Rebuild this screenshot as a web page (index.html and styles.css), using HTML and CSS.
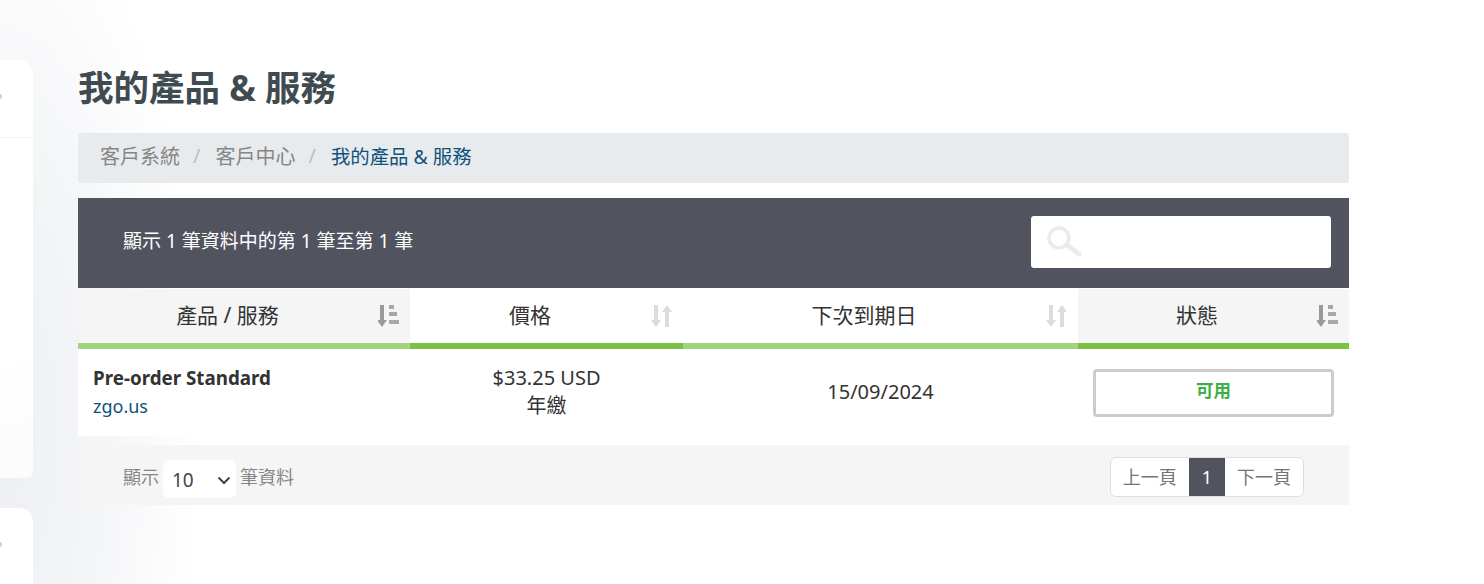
FILE: index.html
```html
<!DOCTYPE html>
<html lang="zh-Hant">
<head>
  <meta charset="UTF-8" />
  <meta name="viewport" content="width=device-width, initial-scale=1.0"/>
  <title>我的產品 &amp; 服務</title>
  <link rel="stylesheet" href="styles.css">
</head>
<body>
  <div class="page">
    <!-- Sidebar cards, mostly off screen -->
    <aside class="sidebar">
      <div class="side-card side-card-first">
        <div class="side-head"><span class="side-dot"></span></div>
      </div>
      <div class="side-card side-card-second">
        <div class="side-head"><span class="side-dot"></span></div>
      </div>
    </aside>

    <main class="content">
      <h1 class="page-title">我的產品 &amp; 服務</h1>

      <nav class="breadcrumb">
        <a href="#">客戶系統</a>
        <span class="crumb-sep">/</span>
        <a href="#">客戶中心</a>
        <span class="crumb-sep">/</span>
        <span class="crumb-active">我的產品 &amp; 服務</span>
      </nav>

      <div class="table-top">
        <div class="table-info">顯示 1 筆資料中的第 1 筆至第 1 筆</div>
        <div class="search-box">
          <svg class="search-icon" viewBox="0 0 38 32" width="38" height="32">
            <circle cx="14" cy="13" r="10" fill="none" stroke="#e9ebee" stroke-width="3.5"/>
            <path d="M22 20 L34 29" stroke="#e9ebee" stroke-width="5" stroke-linecap="round"/>
          </svg>
        </div>
      </div>

      <table class="products">
        <colgroup>
          <col class="col-product"><col class="col-price"><col class="col-date"><col class="col-status">
        </colgroup>
        <thead>
          <tr>
            <th class="sorted">
              產品 / 服務
              <svg class="sort-icon" viewBox="0 0 22 22" width="22" height="22">
                <path d="M2 0h4v15h3l-5 7-5-7h3z" fill="#9a9a9a"/>
                <path d="M11 0h5v4h-5zM11 7h8v4h-8zM11 15h10v4H11z" fill="#a8a8a8"/>
              </svg>
            </th>
            <th class="plain">
              價格
              <svg class="sort-icon" viewBox="0 0 22 22" width="22" height="22">
                <path d="M3 0h4v15h3l-5 7-5-7h3zM14 22h4V7h3l-5-7-5 7h3z" fill="#dcdcdc"/>
              </svg>
            </th>
            <th class="plain">
              下次到期日
              <svg class="sort-icon" viewBox="0 0 22 22" width="22" height="22">
                <path d="M3 0h4v15h3l-5 7-5-7h3zM14 22h4V7h3l-5-7-5 7h3z" fill="#dcdcdc"/>
              </svg>
            </th>
            <th class="sorted">
              狀態
              <svg class="sort-icon" viewBox="0 0 22 22" width="22" height="22">
                <path d="M2 0h4v15h3l-5 7-5-7h3z" fill="#9a9a9a"/>
                <path d="M11 0h5v4h-5zM11 7h8v4h-8zM11 15h10v4H11z" fill="#a8a8a8"/>
              </svg>
            </th>
          </tr>
        </thead>
        <tbody>
          <tr>
            <td class="cell-product"><strong>Pre-order Standard</strong><a href="#">zgo.us</a></td>
            <td class="cell-center">$33.25 USD<br>年繳</td>
            <td class="cell-center">15/09/2024</td>
            <td class="cell-status"><span class="status-badge">可用</span></td>
          </tr>
        </tbody>
      </table>

      <div class="table-foot">
        <div class="page-length">
          顯示
          <div class="length-select">10
            <svg viewBox="0 0 14 9" width="14" height="9"><path d="M1.5 1.5 7 7l5.5-5.5" fill="none" stroke="#444" stroke-width="2"/></svg>
          </div>
          筆資料
        </div>
        <div class="pager">
          <a href="#">上一頁</a>
          <a href="#" class="current">1</a>
          <a href="#">下一頁</a>
        </div>
      </div>
    </main>
  </div>
</body>
</html>
```

FILE: styles.css
```css
* { margin:0; padding:0; box-sizing:border-box; }
html, body { height:100%; overflow:hidden; }
body {
  font-family:"Noto Sans", "Noto Sans CJK TC", sans-serif;
  color:#333;
  background:
    radial-gradient(ellipse 200px 560px at 0 430px, #eeeff3 0%, #f4f5f7 50%, #fff 100%);
}
a { text-decoration:none; }

.page { display:flex; height:584px; overflow:hidden; }

.sidebar { width:33px; flex:none; padding-top:60px; }
.side-card { background:#fff; }
.side-card-first { height:418px; margin-bottom:30px; border-radius:0 14px 6px 0; background:linear-gradient(160deg, #fff 70%, #fbfbfc); }
.side-card-second { height:76px; border-radius:0 14px 0 0; }
.side-head { height:78px; border-bottom:1px solid #f1f2f4; position:relative; }
.side-card-second .side-head { height:76px; border-bottom:none; }
.side-dot { position:absolute; left:-3px; top:34px; width:5px; height:5px; background:#c9ccd2; border-radius:50%; }

.content { width:1271px; margin-left:45px; }

.page-title { font-size:35.5px; line-height:44px; margin-top:65px; font-weight:700; color:#3f4b50; }

.breadcrumb {
  display:flex; align-items:center;
  height:50px; margin-top:24px; padding:0 22px 5px;
  background:#e8ebee; border-radius:3px;
  font-size:20px;
}
.breadcrumb a { color:#868686; }
.crumb-sep { color:#bdbdbd; margin:0 15px 0 13px; }
.crumb-active { color:#0f5279; font-size:19.4px; }

.table-top {
  display:flex; align-items:center; justify-content:space-between;
  height:90px; margin-top:15px; padding:0 18px 0 45px;
  background:#51545f;
}
.table-info { color:#fff; font-size:19px; margin-top:-6px; }
.search-box { width:300px; height:52px; background:#fff; border-radius:3px; padding:9px 14px; margin-top:-2px; }
.search-icon { display:block; }

.products { width:100%; border-collapse:separate; border-spacing:0; table-layout:fixed; margin-top:1px; }
.col-product { width:332px; }
.col-price { width:273px; }
.col-date { width:395px; }
.col-status { width:271px; }
.products th {
  position:relative;
  height:60px; padding:0 33px 4px 0;
  font-size:21px; font-weight:400; color:#333;
  border-bottom:6px solid;
}
.products th.sorted { background:#f5f5f5; }
.products th:nth-child(odd) { border-bottom-color:#a2d47b; }
.products th:nth-child(even) { border-bottom-color:#7bc143; }
.sort-icon { position:absolute; right:10px; top:16px; }

.products td { height:87px; font-size:20px; line-height:28px; padding-bottom:2px; background:#fff; vertical-align:middle; }
.cell-center { text-align:center; }
.products td.cell-product { padding-left:15px; }
.cell-product strong { display:block; font-size:18.8px; font-weight:700; color:#333; }
.cell-product a { display:block; font-size:18px; color:#0f5279; }
.products td.cell-status { padding:0 15px; }
.status-badge {
  display:flex; align-items:center; justify-content:center;
  height:48px; padding-bottom:5px;
  border:3px solid #cccccc; border-radius:4px;
  color:#3cae4a; font-weight:700; font-size:17.5px;
}

.table-foot {
  display:flex; align-items:center; justify-content:space-between;
  height:60px; margin-top:9px; padding:4px 45px 0;
  background:#f5f5f5;
}
.page-length { display:flex; align-items:center; gap:4px; color:#868686; font-size:18px; padding-bottom:2px; }
.length-select {
  display:flex; align-items:center; justify-content:space-between;
  width:73px; height:38px; padding:2px 5px 0 9px; margin-top:6px;
  background:#fff; border-radius:6px;
  color:#444; font-size:19px;
}
.pager { display:flex; height:40px; background:#fff; border:1px solid #dedede; border-radius:6px; overflow:hidden; font-size:18px; }
.pager a { display:flex; align-items:center; padding:0 12px 2px; color:#757575; }
.pager a.current { background:#51545f; color:#fff; padding:0 13px; }
```
